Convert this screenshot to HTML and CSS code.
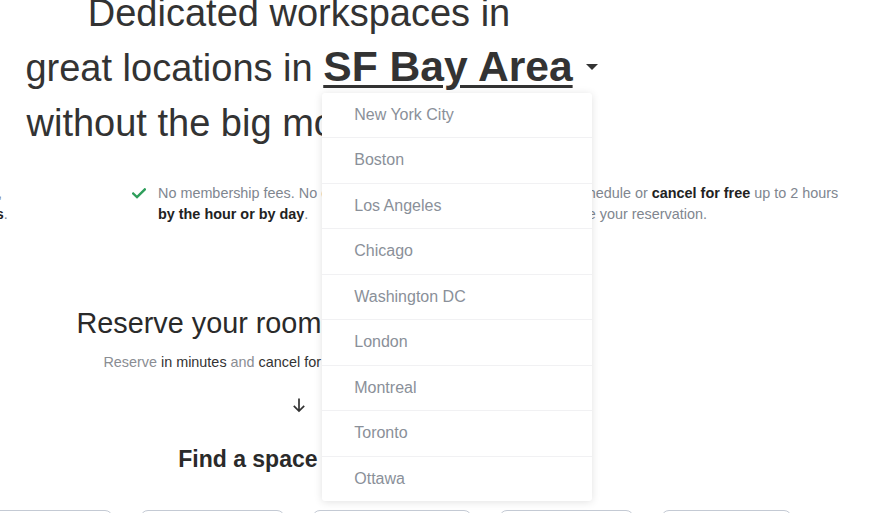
FILE: index.html
```html
<!DOCTYPE html>
<html lang="en">
<head>
<meta charset="utf-8">
<title>Dedicated workspaces</title>
<link rel="stylesheet" href="styles.css">
</head>
<body>
<main class="page">
  <section class="hero">
    <h1 class="hero-title">Dedicated workspaces in<br>great locations in <span class="picker"><span class="picker-label">SF Bay Area</span><span class="caret"></span><span class="dropdown" role="listbox"><span class="option">New York City</span><span class="option">Boston</span><span class="option">Los Angeles</span><span class="option">Chicago</span><span class="option">Washington DC</span><span class="option">London</span><span class="option">Montreal</span><span class="option">Toronto</span><span class="option">Ottawa</span></span></span><br>without the big monthly contract.</h1>
  </section>

  <section class="features">
    <div class="feature">
      <svg class="check" viewBox="0 0 14 11" aria-hidden="true"><path d="M1.2 5.6 L5 9.2 L12.8 1.4" fill="none" stroke="#2e9e5b" stroke-width="2.4" stroke-linecap="square"/></svg>
      <p>Private offices, meeting rooms and desks,<br>bookable instantly in <b>dozens of locations</b>.</p>
    </div>
    <div class="feature">
      <svg class="check" viewBox="0 0 14 11" aria-hidden="true"><path d="M1.2 5.6 L5 9.2 L12.8 1.4" fill="none" stroke="#2e9e5b" stroke-width="2.4" stroke-linecap="square"/></svg>
      <p>No membership fees. No commitment. Pay only<br><b>by the hour or by day</b>.</p>
    </div>
    <div class="feature">
      <svg class="check" viewBox="0 0 14 11" aria-hidden="true"><path d="M1.2 5.6 L5 9.2 L12.8 1.4" fill="none" stroke="#2e9e5b" stroke-width="2.4" stroke-linecap="square"/></svg>
      <p>Reschedule or <b>cancel for free</b> up to 2 hours<br>before your reservation.</p>
    </div>
  </section>

  <section class="reserve">
    <h2 class="reserve-title">Reserve your room in 3 easy steps</h2>
    <p class="reserve-sub">Reserve <span class="em">in minutes</span> and <span class="em">cancel for free</span> up to 24 hours before.</p>
    <svg class="down-arrow" viewBox="0 0 16 16" aria-hidden="true"><path d="M8 1.5 V14 M2.8 8.8 L8 14 L13.2 8.8" fill="none" stroke="#333" stroke-width="1.7"/></svg>
    <h3 class="find-title">Find a space near you</h3>
  </section>

  <nav class="filters">
    <span class="pill pill-a">Private offices</span>
    <span class="pill pill-b">Meeting rooms</span>
    <span class="pill pill-c">Conference rooms</span>
    <span class="pill pill-d">Event spaces</span>
    <span class="pill pill-e">Coworking</span>
  </nav>
</main>
</body>
</html>
```
FILE: styles.css
```css
* {
  box-sizing: border-box;
}

html,
body {
  margin: 0;
  padding: 0;
  height: 100%;
  overflow: hidden;
  background: #ffffff;
}

body {
  font-family: "Liberation Sans", Arial, sans-serif;
  color: #333333;
}

.page {
  width: 598px;
  text-align: center;
}

.hero-title {
  margin: -14px 0 0;
  font-size: 38px;
  font-weight: 400;
  line-height: 55px;
  color: #333333;
  white-space: nowrap;
}

.picker {
  position: relative;
  font-size: 42.6px;
  font-weight: 700;
  line-height: 1;
}

.picker-label {
  text-decoration: underline;
  text-decoration-thickness: 3px;
  text-underline-offset: 4px;
}

.caret {
  position: absolute;
  left: calc(100% + 13px);
  top: 21.5px;
  width: 0;
  height: 0;
  border-left: 6.5px solid transparent;
  border-right: 6.5px solid transparent;
  border-top: 6.5px solid #333333;
}

.dropdown {
  position: absolute;
  top: 50.5px;
  left: -1px;
  z-index: 10;
  display: block;
  width: 270px;
  background: #ffffff;
  border-radius: 3px;
  box-shadow: 0 1px 8px rgba(0, 0, 0, 0.12);
  text-align: left;
  font-size: 16px;
  font-weight: 400;
  line-height: 44.5px;
}

.option {
  display: block;
  padding-left: 32px;
  color: #8a9099;
  border-bottom: 1px solid #f1f1f3;
}

.option:last-child {
  border-bottom: 0;
}

.features {
  display: grid;
  grid-template-columns: 423px 397px 400px;
  width: 1220px;
  margin: 31.5px 0 0 -291px;
  text-align: left;
  font-size: 14.4px;
  line-height: 21px;
  color: #80868f;
  white-space: nowrap;
}

.feature {
  display: flex;
  align-items: flex-start;
}

.check {
  flex: none;
  width: 14px;
  height: 11px;
  margin: 5px 12px 0 0;
}

.feature p {
  margin: 0;
}

.feature b {
  color: #222222;
}

.reserve-title {
  margin: 81px 0 0;
  font-size: 28.8px;
  font-weight: 400;
  line-height: 34px;
  color: #2a2a2a;
  white-space: nowrap;
}

.reserve-sub {
  margin: 12px 0 0;
  font-size: 14.4px;
  line-height: 20px;
  color: #8a8d93;
  white-space: nowrap;
}

.reserve-sub .em {
  color: #333333;
}

.down-arrow {
  display: block;
  width: 16px;
  height: 16px;
  margin: 25px auto 0;
}

.find-title {
  margin: 32px 0 0;
  font-size: 23px;
  font-weight: 700;
  line-height: 28px;
  color: #2a2a2a;
  white-space: nowrap;
}

.filters {
  display: flex;
  gap: 27px;
  width: 900px;
  margin: 37px 0 0 -40px;
}

.pill {
  flex: none;
  height: 40px;
  border: 1px solid #c4cad4;
  border-radius: 8px;
  font-size: 14px;
  line-height: 38px;
  color: #555555;
  text-align: center;
}

.pill-a { width: 153px; }
.pill-b { width: 145px; }
.pill-c { width: 160px; }
.pill-d { width: 135px; }
.pill-e { width: 131px; }
```
